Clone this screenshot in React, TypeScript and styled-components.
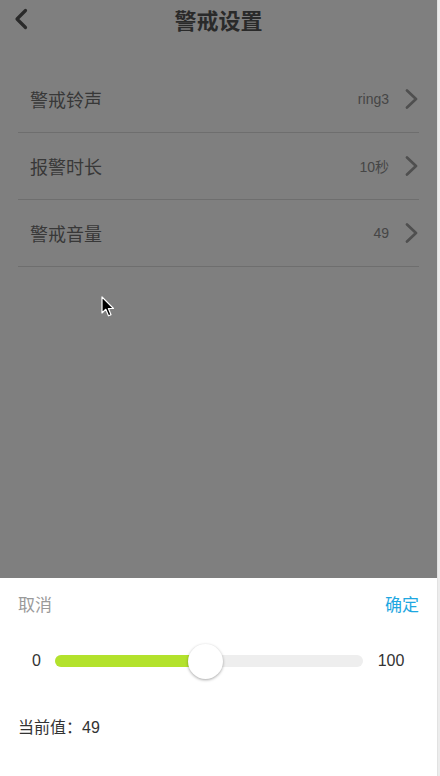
import React from "react";
import styled, { createGlobalStyle } from "styled-components";

const Global = createGlobalStyle`
  html, body { margin: 0; padding: 0; background: #ffffff; }
  body { font-family: "Liberation Sans", "Noto Sans CJK SC", sans-serif; }
  * { box-sizing: border-box; }
`;

const Frame = styled.div`
  display: flex;
  width: 440px;
  height: 776px;
  overflow: hidden;
`;

const Main = styled.div`
  position: relative;
  width: 437px;
  height: 776px;
  background: #ffffff;
  display: flex;
  flex-direction: column;
`;

const ScrollStrip = styled.div`
  width: 3px;
  height: 776px;
  background: #ececec;
  border-left: 1px solid #e2e2e2;
`;

const Header = styled.div`
  height: 38px;
  display: flex;
  align-items: center;
  justify-content: center;
  position: relative;
`;

const BackButton = styled.div`
  position: absolute;
  left: 14px;
  top: 8px;
  width: 16px;
  height: 22px;
  display: flex;
  align-items: center;
`;

const Title = styled.h1`
  margin: 0;
  font-family: "Noto Sans CJK SC", sans-serif;
  font-size: 22px;
  font-weight: 700;
  color: #555555;
  line-height: 1;
`;

const List = styled.div`
  padding: 28px 18px 0;
  display: flex;
  flex-direction: column;
`;

const Row = styled.div`
  height: 67px;
  border-bottom: 1px solid #dcdcdc;
  display: flex;
  align-items: center;
  padding: 0 1px 0 12px;
`;

const Label = styled.span`
  flex: 1;
  font-family: "Noto Sans CJK SC", sans-serif;
  font-size: 18px;
  color: #707070;
`;

const Value = styled.span`
  font-family: "Liberation Sans", "Noto Sans CJK SC", sans-serif;
  font-size: 14px;
  color: #8c8c8c;
  margin-right: 16px;
`;

const Chevron = styled.svg`
  width: 13px;
  height: 20px;
  display: block;
`;

const Overlay = styled.div`
  position: absolute;
  inset: 0;
  background: rgba(0, 0, 0, 0.5);
`;

const Sheet = styled.div`
  position: absolute;
  left: 0;
  right: 0;
  bottom: 0;
  height: 198px;
  background: #ffffff;
  padding: 0 18px;
  display: flex;
  flex-direction: column;
`;

const ActionBar = styled.div`
  height: 50px;
  display: flex;
  align-items: center;
  justify-content: space-between;
`;

const Action = styled.span<{ $primary?: boolean }>`
  font-family: "Noto Sans CJK SC", sans-serif;
  font-size: 17px;
  color: ${(p) => (p.$primary ? "#1ea7e1" : "#9a9a9a")};
`;

const SliderRow = styled.div`
  height: 66px;
  display: flex;
  align-items: center;
`;

const RangeLabel = styled.span<{ $w: number }>`
  width: ${(p) => p.$w}px;
  text-align: center;
  font-size: 16px;
  color: #333333;
`;

const Track = styled.div`
  position: relative;
  flex: 1;
  height: 12px;
  border-radius: 6px;
  background: #eeeeee;
`;

const Fill = styled.div`
  position: absolute;
  left: 0;
  top: 0;
  bottom: 0;
  border-radius: 6px;
  background: #b3e22c;
`;

const Thumb = styled.div`
  position: absolute;
  top: 50%;
  width: 35px;
  height: 35px;
  margin-left: -17.5px;
  margin-top: -17.5px;
  border-radius: 50%;
  background: #ffffff;
  box-shadow: 0 1px 3px rgba(0, 0, 0, 0.35);
`;

const CurrentValue = styled.div`
  height: 64px;
  display: flex;
  align-items: center;
  font-family: "Liberation Sans", "Noto Sans CJK SC", sans-serif;
  font-size: 16px;
  color: #333333;
`;

const Cursor = styled.svg`
  position: absolute;
  left: 101px;
  top: 296px;
  width: 14px;
  height: 22px;
`;

const rows = [
  { label: "警戒铃声", value: "ring3" },
  { label: "报警时长", value: "10秒" },
  { label: "警戒音量", value: "49" },
];

export default function App() {
  const value = 49;
  return (
    <>
      <Global />
      <Frame>
        <Main>
          <Header>
            <BackButton>
              <svg width="14" height="22" viewBox="0 0 14 22">
                <path d="M11.5 2.5 L3 11 L11.5 19.5" fill="none" stroke="#555" strokeWidth="3.2" strokeLinecap="round" strokeLinejoin="round" />
              </svg>
            </BackButton>
            <Title>警戒设置</Title>
          </Header>
          <List>
            {rows.map((r) => (
              <Row key={r.label}>
                <Label>{r.label}</Label>
                <Value>{r.value}</Value>
                <Chevron viewBox="0 0 13 20">
                  <path d="M2 1.5 L11 10 L2 18.5" fill="none" stroke="#9e9e9e" strokeWidth="2.7" strokeLinecap="round" strokeLinejoin="round" />
                </Chevron>
              </Row>
            ))}
          </List>
          <Overlay />
          <Cursor viewBox="0 0 14 22">
            <path d="M1 1 L1 17 L4.8 13.3 L7.5 19.8 L10 18.8 L7.4 12.5 L12.5 12.5 Z" fill="#000" stroke="#fff" strokeWidth="1.2" strokeLinejoin="round" />
          </Cursor>
          <Sheet>
            <ActionBar>
              <Action>取消</Action>
              <Action $primary>确定</Action>
            </ActionBar>
            <SliderRow>
              <RangeLabel $w={37}>0</RangeLabel>
              <Track>
                <Fill style={{ width: `${value}%` }} />
                <Thumb style={{ left: `${value}%` }} />
              </Track>
              <RangeLabel $w={56}>100</RangeLabel>
            </SliderRow>
            <CurrentValue>当前值：{value}</CurrentValue>
          </Sheet>
        </Main>
        <ScrollStrip />
      </Frame>
    </>
  );
}
